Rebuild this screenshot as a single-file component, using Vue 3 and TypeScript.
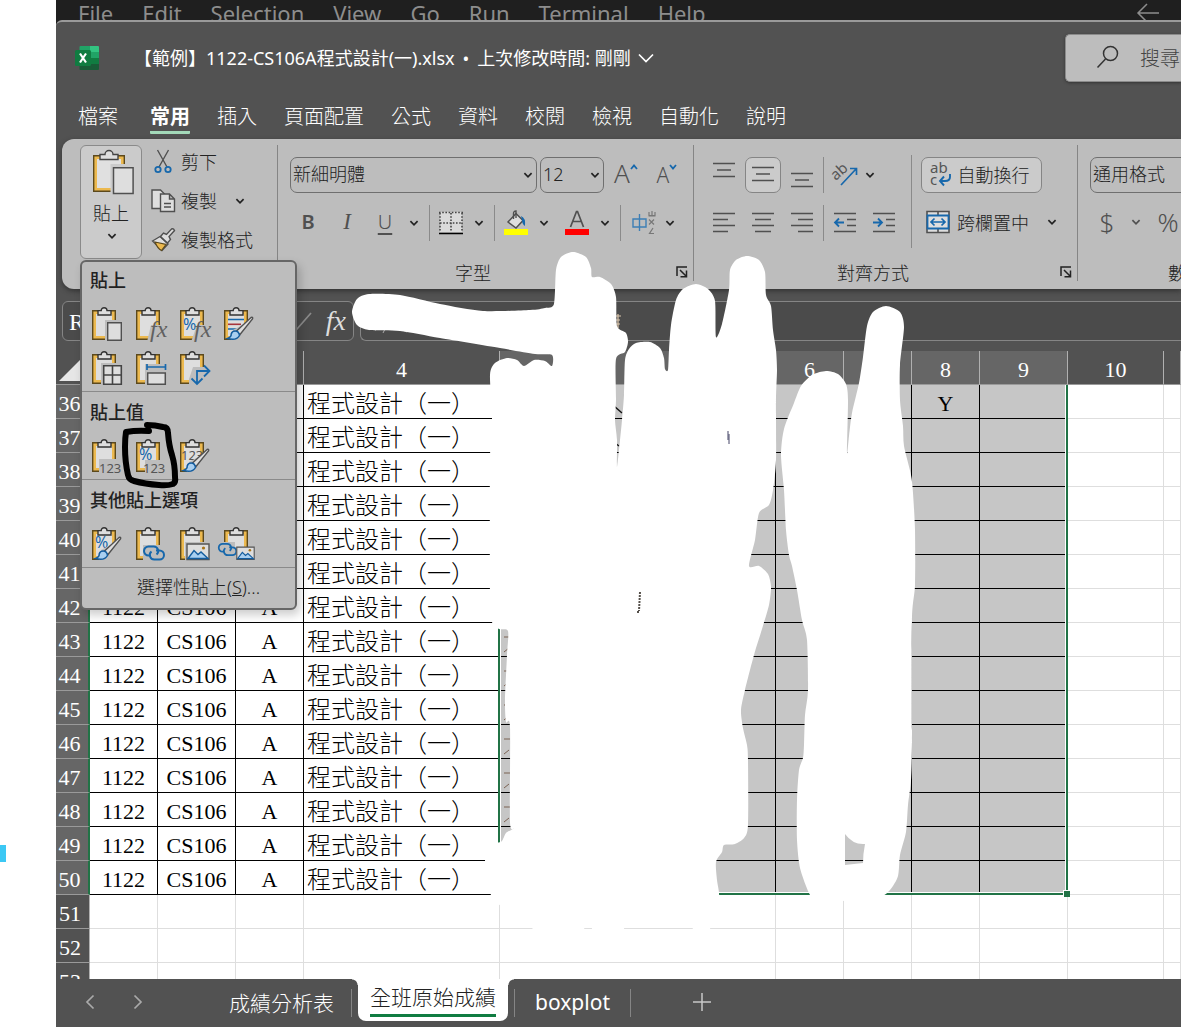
<script setup lang="ts">
type Point = [number, number]

interface Row {
  n: number
  filled: boolean
}

const menus: string[] = ['File', 'Edit', 'Selection', 'View', 'Go', 'Run', 'Terminal', 'Help']
const tabs: string[] = ['檔案', '常用', '插入', '頁面配置', '公式', '資料', '校閱', '檢視', '自動化', '說明']
const rows: Row[] = Array.from({ length: 18 }, (_, i) => ({ n: 36 + i, filled: i < 15 }))
/* Covered headings stay blank. */
const columns: string[] = ['', '', '', '4', '', '6', '', '8', '9', '10', '']

/* The open paste menu covers the first columns down to this row. */
const firstClearRow = 42

/* Turns a list of points into a closed, softly rounded outline. */
function blob(points: Point[]): string {
  const n = points.length
  const k = 8
  let d = `M${points[0][0]} ${points[0][1]}`
  for (let i = 0; i < n; i++) {
    const a = points[(i - 1 + n) % n]
    const b = points[i]
    const c = points[(i + 1) % n]
    const e = points[(i + 2) % n]
    d += `C${b[0] + (c[0] - a[0]) / k} ${b[1] + (c[1] - a[1]) / k} ${c[0] - (e[0] - b[0]) / k} ${c[1] - (e[1] - b[1]) / k} ${c[0]} ${c[1]}`
  }
  return d + 'Z'
}

const nameMask = blob([
  [352, 312], [357, 299], [369, 294], [400, 295], [440, 304], [483, 311], [530, 310], [545, 308], [554, 304],
  [556, 270], [561, 257], [573, 252], [586, 257], [591, 268], [592, 277], [600, 277], [611, 284], [616, 297],
  [617, 326], [626, 333], [628, 342], [625, 352], [616, 359], [616, 400], [615, 420], [617, 440], [617, 467],
  [620, 440], [622, 420], [624, 395], [625, 360], [629, 349], [636, 343], [650, 342], [660, 348], [664, 358],
  [665, 369], [668, 370], [669, 350], [671, 325], [676, 300], [683, 289], [696, 284], [708, 289], [715, 301],
  [716, 337], [722, 324], [729, 290], [730, 270], [736, 260], [747, 256], [759, 260], [765, 272], [766, 295],
  [771, 306], [773, 330], [776, 350], [777, 370], [776, 400], [776, 460], [773, 490], [769, 505], [759, 513],
  [755, 540], [749, 566], [759, 566], [768, 574], [771, 587], [769, 605], [762, 629], [754, 655], [745, 690],
  [741, 710], [743, 728], [747, 745], [748, 760], [748, 825], [744, 838], [735, 844], [724, 845], [722, 852],
  [716, 862], [717, 880], [719, 896], [712, 910], [709, 932], [693, 932], [690, 915], [625, 915], [624, 934],
  [594, 934], [592, 920], [584, 920], [581, 934], [536, 934], [530, 915], [502, 906], [497, 902], [491, 895],
  [487, 880], [485, 860], [486, 848], [497, 843], [502, 841], [506, 833], [514, 828], [510, 822], [510, 727],
  [506, 722], [505, 700], [507, 655], [508, 631], [499, 629], [492, 622], [490, 590], [490, 460], [492, 418],
  [490, 375], [495, 363], [507, 358], [517, 360], [524, 366], [534, 360], [545, 361], [552, 366], [552, 355],
  [535, 354], [500, 348], [440, 338], [400, 331], [369, 330], [357, 325]
])

const scoreMask = blob([
  [826, 371], [812, 375], [801, 386], [794, 403], [784, 429], [781, 455], [784, 490], [786, 530], [789, 555],
  [792, 566], [797, 590], [802, 620], [807, 640], [808, 690], [805, 715], [804, 745], [803, 758], [799, 770],
  [797, 800], [797, 840], [800, 868], [809, 893], [815, 897], [845, 901], [878, 898], [890, 890], [898, 876],
  [900, 855], [906, 832], [908, 805], [911, 780], [912, 740], [912, 620], [915, 585], [915, 530], [913, 493],
  [911, 475], [904, 446], [903, 426], [900, 400], [900, 365], [904, 327], [900, 312], [886, 306], [873, 312],
  [867, 326], [863, 357], [859, 383], [852, 413], [849, 436], [847, 453], [848, 400], [846, 384], [838, 374]
])
const scoreGap = 'M845 834Q853 845 865 844Q863 854 863 863L845 865Z'
</script>

<template>
  <div class="page">
    <svg width="0" height="0" class="sprite" aria-hidden="true">
      <symbol id="chev" viewBox="0 0 10 10"><path d="M1.4 3.2 5 6.8 8.6 3.2" fill="none" stroke="currentColor" stroke-width="1.7" /></symbol>
      <symbol id="clip" viewBox="0 0 44 44">
        <path d="M2.700 7.700h22.600v28.600H2.700z" fill="#ecb94f" stroke="#5c491c" stroke-width="1.400" />
        <path d="M6 11h16v22H6z" fill="#dedede" />
        <path d="M8 12V7.600h3.200a2.900 2.900 0 0 1 5.800 0H21V12z" fill="#dedede" stroke="#333" stroke-width="1.400" />
      </symbol>
      <symbol id="brush" viewBox="0 0 30 30">
        <path d="M8 15 19 9h6v20H5z" fill="#bdbdbd" />
        <path d="M11 16.500 26 2.500q2.400-.8 1.500 1.500L15 19.500z" fill="#dedede" stroke="#505050" stroke-width="1.400" />
        <path d="M10 16q4 0 4.500 4.500-3 5.500-12 3 4-1.500 3.700-4.500.8-3 3.800-3z" fill="#a9cff0" stroke="#135c9e" stroke-width="1.500" />
      </symbol>
      <symbol id="pic" viewBox="0 0 24 18">
        <path d="M1 1h22v15.500H1z" fill="#dedede" stroke="#555" stroke-width="1.400" />
        <path d="m2 15.500 6-8 4 4 3-2.500 7 6.500z" fill="#a9cff0" stroke="#135c9e" stroke-width="1.400" />
        <circle cx="17.500" cy="5" r="1.600" fill="#a8741a" />
      </symbol>
      <symbol id="chain" viewBox="0 0 24 16">
        <path d="M9 10.500H6.500a4.500 4.500 0 1 1 0-9h5a4.500 4.500 0 0 1 3 8M14 5.500h3.500a4.500 4.500 0 1 1 0 9h-5a4.500 4.500 0 0 1-3-8" fill="none" stroke="#1768ac" stroke-width="2" />
      </symbol>
      <symbol id="launch" viewBox="0 0 12 12"><path d="M1 10V1h10M4 4l6 6M10.500 4.500v6.300H4.500" fill="none" stroke="#222" stroke-width="1.500" /></symbol>
    </svg>

    <aside class="gutter"><i class="caret"></i></aside>

    <div class="main">
      <nav class="code-menu">
        <a v-for="m in menus" :key="m" href="#">{{ m }}</a>
        <svg class="back" width="24" height="20" viewBox="0 0 24 20"><path d="M23 10H2m9-9L2 10l9 9" fill="none" stroke="#8d8d8d" stroke-width="1.500" /></svg>
      </nav>

      <div class="excel">
        <header class="title-bar">
          <svg class="logo" width="24" height="24" viewBox="0 0 24 24">
            <path d="M4.500 1q0-1 1-1H15v6H4.500z" fill="#21a366" /><path d="M15 0h8q1 0 1 1v5h-9z" fill="#33c481" />
            <path d="M4.500 6H15v6H4.500z" fill="#107c41" /><path d="M15 6h9v6h-9z" fill="#21a366" />
            <path d="M4.500 12H15v6H4.500z" fill="#185c37" /><path d="M15 12h9v6h-9z" fill="#107c41" />
            <path d="M4.500 18H24v5q0 1-1 1H5.500q-1 0-1-1z" fill="#185c37" />
            <rect x="0" y="4" width="16" height="16" rx="1.500" fill="#107c41" />
            <path d="m5 7.500 6 9M11 7.500l-6 9" stroke="#fff" stroke-width="2.200" />
          </svg>
          <h1><span>【範例】1122-CS106A程式設計(一).xlsx</span><span>•</span><span>上次修改時間: 剛剛</span></h1>
          <svg class="title-chev" width="16" height="10" viewBox="0 0 16 10"><path d="m1 1.500 7 7 7-7" fill="none" stroke="#fff" stroke-width="1.700" /></svg>
          <label class="search">
            <svg width="24" height="24" viewBox="0 0 24 24"><g fill="none" stroke="#333" stroke-width="1.500"><circle cx="14.500" cy="8.500" r="7" /><path d="m9.500 14-8 8.500" /></g></svg>
            <span>搜尋</span>
          </label>
        </header>

        <nav class="tabs">
          <a v-for="t in tabs" :key="t" href="#" :class="{ on: t === '常用' }">{{ t }}</a>
        </nav>

        <section class="ribbon">
          <div class="group clipboard">
            <div class="paste-wrap">
              <button class="paste">
                <svg width="40" height="46" viewBox="2 1 40 46">
                  <path d="M2.700 7.700h30.600v35.600H2.700z" fill="#ecb94f" stroke="#5c491c" stroke-width="1.400" />
                  <path d="M6 11h24v29H6z" fill="#e0e0e0" />
                  <path d="M9 11.500V6.500h5a4 4 0 0 1 8 0h5v5z" fill="#dedede" stroke="#444" stroke-width="1.400" />
                  <path d="M19.500 16H44v31H19.500z" fill="#cbcbcb" />
                  <path d="M22.500 19.800h19.600v25.800H22.500z" fill="#dedede" stroke="#505050" stroke-width="1.500" />
                </svg>
                <span>貼上</span>
                <svg width="10" height="10"><use href="#chev" /></svg>
              </button>

              <div class="menu">
                <section>
                  <h2>貼上</h2>
                  <div class="opts">
                    <button aria-label="貼上"><svg width="44" height="44"><use href="#clip" /><path d="M15 17h19v22H15z" fill="#bdbdbd" /><path d="M17.700 19.700h13.600v17.600H17.700z" fill="#dedede" stroke="#505050" stroke-width="1.400" /></svg></button>
                    <button aria-label="公式"><svg width="44" height="44"><use href="#clip" /><path d="M17 22h12v17H13z" fill="#bdbdbd" /><text x="16" y="34" class="fx">fx</text></svg></button>
                    <button aria-label="公式與數字格式"><svg width="44" height="44"><use href="#clip" /><path d="M19 22h12v17H13z" fill="#bdbdbd" /><text x="5" y="27" class="pct">%</text><text x="16" y="34" class="fx">fx</text></svg></button>
                    <button aria-label="保持來源格式設定"><svg width="44" height="44"><use href="#clip" /><path d="M6 16.500h16M6 26h9" stroke="#1768ac" stroke-width="1.600" /><path d="M6 21.300h13" stroke="#a8343c" stroke-width="1.600" /><use href="#brush" x="3" y="12" width="30" height="30" /></svg></button>
                    <button aria-label="無框線"><svg width="44" height="44"><use href="#clip" /><path d="M11 16h23v22H11z" fill="#bdbdbd" /><path d="M13.700 18.700h17.600v18.600H13.700zM22.500 18.700v18.600M13.700 28h17.600" fill="#dedede" stroke="#444" stroke-width="1.600" /></svg></button>
                    <button aria-label="保持來源欄寬"><svg width="44" height="44"><use href="#clip" /><path d="M11 17h23v22H11z" fill="#bdbdbd" /><path d="M13.700 26h17.600v11.300H13.700z" fill="#dedede" stroke="#505050" stroke-width="1.500" /><path d="M13 17v6M31.500 17v6M13 20h18" stroke="#1768ac" stroke-width="1.700" fill="none" /></svg></button>
                    <button aria-label="轉置"><svg width="44" height="44"><use href="#clip" /><path d="M15 20h11v18H11v-6z" fill="#bdbdbd" /><path d="M19 36V24h12M26 18.500l5.500 5.500-5.500 5.500M13.500 31.500l5.500 5.500 5.500-5.500" stroke="#1768ac" stroke-width="1.800" fill="none" /></svg></button>
                  </div>
                </section>
                <section>
                  <h2>貼上值</h2>
                  <div class="opts">
                    <button aria-label="值"><svg width="44" height="44"><use href="#clip" /><path d="M9 24h22v15H9z" fill="#bdbdbd" /><text x="9" y="38" class="num">123</text></svg></button>
                    <button aria-label="值與數字格式"><svg width="44" height="44"><use href="#clip" /><path d="M11 25h21v14H11z" fill="#bdbdbd" /><text x="5" y="25" class="pct">%</text><text x="9" y="38" class="num">123</text></svg></button>
                    <button aria-label="值與來源格式設定"><svg width="44" height="44"><use href="#clip" /><text x="3" y="25" class="num">123</text><use href="#brush" x="3" y="12" width="30" height="30" /></svg></button>
                  </div>
                </section>
                <section>
                  <h2>其他貼上選項</h2>
                  <div class="opts">
                    <button aria-label="設定格式"><svg width="44" height="44"><use href="#clip" /><text x="5" y="25" class="pct">%</text><use href="#brush" x="3" y="12" width="30" height="30" /></svg></button>
                    <button aria-label="貼上連結"><svg width="44" height="44"><use href="#clip" /><path d="M9 22h19v17H9z" fill="#bdbdbd" /><use href="#chain" x="8" y="22" width="24" height="16" /></svg></button>
                    <button aria-label="圖片"><svg width="44" height="44"><use href="#clip" /><path d="M7 19h25v19H7z" fill="#bdbdbd" /><use href="#pic" x="8" y="20" width="24" height="18" /></svg></button>
                    <button aria-label="連結的圖片"><svg width="44" height="44"><use href="#clip" /><path d="M1 19h12v19H1zM12 24h15v14H12z" fill="#bdbdbd" /><use href="#chain" x="-5" y="19" width="21" height="15" /><use href="#pic" x="14" y="23" width="19" height="15" /></svg></button>
                  </div>
                </section>
                <a class="special" href="#">選擇性貼上(<u>S</u>)...</a>
              </div>
            </div>
            <div class="clip-list">
              <button><svg width="24" height="26" viewBox="0 0 24 26"><g fill="none"><path d="M6.500 1 16 18M17.500 1 8 18" stroke="#505050" stroke-width="1.400" /><g stroke="#1768ac" stroke-width="1.800"><circle cx="7" cy="20.500" r="2.700" /><circle cx="17" cy="20.500" r="2.700" /></g></g></svg>剪下</button>
              <button><svg width="24" height="26" viewBox="0 0 24 26"><g fill="#dedede" stroke="#505050" stroke-width="1.400"><path d="M1 2h8.500l4 4v14.500H1z" /><path d="M9.500 6h9l5 5v12.500h-14zM18.500 6v5h5M13 15.500h7M13 19h7" /></g></svg>複製<svg class="drop" width="10" height="10"><use href="#chev" /></svg></button>
              <button><svg width="24" height="26" viewBox="0 0 24 26"><path d="M1.500 14 9 9.500l8 7.500-6 6.500z" fill="#dedede" stroke="#505050" stroke-width="1.400" /><path d="m4 15 11 2.500-4.500 6q-4-2-6.500-8.500z" fill="#ecb94f" stroke="#5c491c" stroke-width="1.200" /><path d="m9.500 9.500 3-3.500 3 1.500 5-5.500q2-.8 3 1.500l-5.500 6 1.500 3-3 3.500z" fill="#dedede" stroke="#505050" stroke-width="1.400" /></svg>複製格式</button>
            </div>
          </div>

          <div class="group font">
            <div class="line one">
              <span class="combo face"><select aria-label="字型"><option>新細明體</option></select><svg width="10" height="10"><use href="#chev" /></svg></span>
              <span class="combo size"><select aria-label="字型大小"><option>12</option></select><svg width="10" height="10"><use href="#chev" /></svg></span>
              <button class="grow" aria-label="放大字型"><b>A</b><svg width="8" height="6"><path d="m1 5 3-3.500L7 5" fill="none" stroke="#1768ac" stroke-width="1.800" /></svg></button>
              <button class="grow small" aria-label="縮小字型"><b>A</b><svg width="8" height="6"><path d="m1 1 3 3.500L7 1" fill="none" stroke="#1768ac" stroke-width="1.800" /></svg></button>
            </div>
            <div class="line two">
              <button class="bold">B</button>
              <button class="ital">I</button>
              <button class="undl">U</button>
              <button aria-label="底線選項"><svg width="10" height="10"><use href="#chev" /></svg></button>
              <i class="bar"></i>
              <button aria-label="框線"><svg width="24" height="24" viewBox="0 0 24 24"><path d="M1 1h22v20H1z" fill="#dadada" /><path d="M0 1.500h24M1 2v19M23 2v19M12 2v19M1 12h22" fill="none" stroke="#444" stroke-width="1.600" stroke-dasharray="1.600 1.600" /><path d="M0 22.500h24" stroke="#000" stroke-width="1.600" /></svg></button>
              <button aria-label="框線選項"><svg width="10" height="10"><use href="#chev" /></svg></button>
              <i class="bar"></i>
              <button aria-label="填滿色彩"><svg width="24" height="26" viewBox="0 0 24 26"><path d="m4 12 8-8.500 7 7L12 18z" fill="#dedede" stroke="#505050" stroke-width="1.500" /><path d="M9.500 9V3.500q0-2.500 2.500-2.500v7" fill="none" stroke="#505050" stroke-width="1.400" /><path d="M17 6q5 2 4 10-3-2-3-6z" fill="#1768ac" /><path d="M0 19h24v6H0z" fill="#ff0" /></svg></button>
              <button aria-label="填滿選項"><svg width="10" height="10"><use href="#chev" /></svg></button>
              <button aria-label="字型色彩"><svg width="24" height="26" viewBox="0 0 24 26"><path d="m5.500 17 6-15.500h1l6 15.500M8 11.500h8" fill="none" stroke="#505050" stroke-width="1.700" /><path d="M0 19h24v6H0z" fill="#f00" /></svg></button>
              <button aria-label="色彩選項"><svg width="10" height="10"><use href="#chev" /></svg></button>
              <i class="bar"></i>
              <button aria-label="注音"><svg width="24" height="26" viewBox="0 0 24 26"><path d="M1 9h13v8H1zM7.500 4v17" fill="none" stroke="#3d7fb5" stroke-width="1.400" /><path d="M17 2v3.500h6V2M20 1v5M16.500 6h7M17 9.500l5 5M22 9.500l-5 5M21 18l-3.500 5.500H22" fill="none" stroke="#777" stroke-width="1.200" /></svg></button>
              <button aria-label="注音選項"><svg width="10" height="10"><use href="#chev" /></svg></button>
            </div>
            <footer><span>字型</span><button aria-label="字型設定"><svg width="12" height="12"><use href="#launch" /></svg></button></footer>
          </div>

          <div class="group align">
            <div class="cols">
              <div>
                <div class="line top">
                  <button aria-label="靠上對齊"><svg width="22" height="26"><path d="M0 1.500h22M4 8h14M0 14.500h22" class="rule" /></svg></button>
                  <button class="on" aria-label="置中對齊"><svg width="22" height="26"><path d="M0 5.500h22M4 12h14M0 18.500h22" class="rule" /></svg></button>
                  <button aria-label="靠下對齊"><svg width="22" height="26"><path d="M0 11.500h22M4 18h14M0 24.500h22" class="rule" /></svg></button>
                  <i class="bar"></i>
                  <button aria-label="方向"><svg width="26" height="26" viewBox="0 0 26 26"><text x="3" y="17" transform="rotate(-42 6 17)" class="ab">ab</text><path d="M9 23 24 7M18 6.500h6.500V13" fill="none" stroke="#1768ac" stroke-width="1.700" /></svg></button>
                  <button aria-label="方向選項"><svg width="10" height="10"><use href="#chev" /></svg></button>
                </div>
                <div class="line bottom">
                  <button aria-label="靠左對齊"><svg width="22" height="22"><path d="M0 1.500h22M0 7.500h15M0 13.500h22M0 19.500h15" class="rule" /></svg></button>
                  <button aria-label="置中"><svg width="22" height="22"><path d="M0 1.500h22M3 7.500h16M0 13.500h22M3 19.500h16" class="rule" /></svg></button>
                  <button aria-label="靠右對齊"><svg width="22" height="22"><path d="M0 1.500h22M7 7.500h15M0 13.500h22M7 19.500h15" class="rule" /></svg></button>
                  <i class="bar"></i>
                  <button aria-label="減少縮排"><svg width="22" height="22"><path d="M0 1.500h22M13 7.500h9M13 13.500h9M0 19.500h22" class="rule" /><path d="M10 10.500H1.500M5 6.500l-4 4 4 4" fill="none" stroke="#1768ac" stroke-width="1.800" /></svg></button>
                  <button aria-label="增加縮排"><svg width="22" height="22"><path d="M0 1.500h22M13 7.500h9M13 13.500h9M0 19.500h22" class="rule" /><path d="M0 10.500h8.500M5 6.500l4 4-4 4" fill="none" stroke="#1768ac" stroke-width="1.800" /></svg></button>
                </div>
              </div>
              <i class="bar tall"></i>
              <div class="wide">
                <button class="on"><svg width="22" height="26" viewBox="2 0 22 26"><text x="1" y="12" class="ab">ab</text><text x="1" y="24" class="ab">c</text><path d="M21 13v3q0 4-5 4h-5M15 15.500 11 20l4 4.500" fill="none" stroke="#1768ac" stroke-width="1.900" /></svg>自動換行</button>
                <button class="merge"><svg width="24" height="24" viewBox="0 0 24 24"><path d="M1 1.500h22v21H1z" fill="#dedede" stroke="#505050" stroke-width="1.600" /><path d="M12 1v22" stroke="#505050" stroke-width="1.600" /><path d="M1.500 5.500h21v13h-21z" fill="#dedede" stroke="#1768ac" stroke-width="1.800" /><path d="M5 12h14M8.500 8.500 5 12l3.500 3.500M15.500 8.500 19 12l-3.500 3.500" fill="none" stroke="#1768ac" stroke-width="1.700" /></svg>跨欄置中<svg class="drop" width="10" height="10"><use href="#chev" /></svg></button>
              </div>
            </div>
            <footer><span>對齊方式</span><button aria-label="對齊設定"><svg width="12" height="12"><use href="#launch" /></svg></button></footer>
          </div>

          <div class="group number">
            <span class="combo"><select aria-label="數值格式"><option>通用格式</option></select></span>
            <div class="line money">
              <button>$</button>
              <button aria-label="貨幣選項"><svg width="10" height="10"><use href="#chev" /></svg></button>
              <button>%</button>
            </div>
            <footer><span>數值</span></footer>
          </div>
        </section>

        <div class="formula">
          <input class="name" aria-label="名稱方塊" value="R" />
          <div class="fx-box">
            <svg width="28" height="20" viewBox="0 0 28 20"><path d="m6 10 7 8L27 2" fill="none" stroke="#8a8a8a" stroke-width="1.700" /></svg>
            <i>fx</i>
          </div>
          <input class="value" aria-label="資料編輯列" />
        </div>

        <div class="sheet">
          <table>
            <colgroup>
              <col class="w34" /><col class="w68" /><col class="w78" /><col class="w68" /><col class="w196" /><col class="w276" />
              <col class="w68" /><col class="w68" /><col class="w68" /><col class="w88" /><col class="w96" /><col />
            </colgroup>
            <thead>
              <tr>
                <th class="corner"><svg width="22" height="22" viewBox="0 0 22 22"><path d="M22 0v22H0z" fill="#e6e6e6" /></svg></th>
                <th v-for="(c, i) in columns" :key="i" :class="{ picked: i > 3 && i < 9 }">{{ c }}</th>
              </tr>
            </thead>
            <tbody>
              <tr v-for="r in rows" :key="r.n" :class="{ filled: r.filled }">
                <th>{{ r.n }}</th>
                <template v-if="r.filled">
                  <template v-if="r.n >= firstClearRow"><td>1122</td><td>CS106</td><td>A</td></template>
                  <template v-else><td></td><td></td><td></td></template>
                  <td class="course">程式設計（一）</td>
                  <td class="sel"></td><td class="sel"></td><td class="sel"></td>
                  <td class="sel">{{ r.n === 36 ? 'Y' : '' }}</td><td class="sel"></td>
                </template>
                <template v-else><td v-for="k in 9" :key="k"></td></template>
                <td class="plain"></td><td class="plain"></td>
              </tr>
            </tbody>
          </table>
          <div class="range"><i></i></div>
        </div>

        <footer class="sheets">
          <button class="nav" aria-label="上一張"><svg width="10" height="16"><path d="M8.500 1.500 2 8l6.500 6.500" fill="none" stroke="#aaa" stroke-width="1.700" /></svg></button>
          <button class="nav" aria-label="下一張"><svg width="10" height="16"><path d="M1.500 1.500 8 8l-6.500 6.500" fill="none" stroke="#aaa" stroke-width="1.700" /></svg></button>
          <button class="tab first">成績分析表</button>
          <button class="tab active"><span>全班原始成績</span></button>
          <button class="tab last">boxplot</button>
          <button class="add" aria-label="新增工作表"><svg width="18" height="18"><path d="M9 0v18M0 9h18" stroke="#c8c8c8" stroke-width="1.500" /></svg></button>
        </footer>
      </div>
    </div>

    <svg class="ink" aria-hidden="true">
      <path d="m385 329-2 4M400 329l7 3" stroke="#aaa" stroke-width="1" fill="none" />
      <path d="M616 316h5M616 320h4M616 324h4M618 314v14" stroke="#dcc7ad" stroke-width="1.200" fill="none" />
      <path d="m614 406 8 7M615 443l4 3" stroke="#111" stroke-width="1.500" fill="none" />
      <path v-for="k in 6" :key="k" d="M504 0h6M504 15l5-4" :transform="`translate(0 ${603 + k * 34})`" stroke="#7b6252" stroke-width="1" fill="none" />
      <path :d="nameMask" fill="#fff" />
      <path :d="scoreMask + scoreGap" fill="#fff" fill-rule="evenodd" />
      <path d="M728 431v9M729 434v10" stroke="#444466" stroke-width="1" fill="none" />
      <path d="m640 592-1 19M637 612h3" stroke="#55504a" stroke-width="2" stroke-dasharray="2 1" fill="none" />
      <path d="M149 431q-12-1-23 1-1 6-1 15 0 15 3 28 1 5 6 6 11 3 25 4 8 1 14-1 3-2 2-7 0-12-3-22-3-9-4-22 0-6-5-6-8-2-16-2" fill="none" stroke="#000" stroke-width="6" stroke-linecap="round" stroke-linejoin="round" />
    </svg>
  </div>
</template>

<style>
body { margin: 0; background: #fff; }
</style>

<style scoped>
.page, .page * { box-sizing: border-box; }
.page { position: relative; display: flex; height: 100vh; overflow: hidden; font-family: "Noto Sans", "Noto Sans CJK TC", sans-serif; font-size: 18px; font-weight: 300; color: #262626; }
.sprite { position: absolute; }
.page svg { flex: none; display: block; overflow: visible; }
.page button { border: 0; padding: 0; background: none; font: inherit; color: inherit; display: flex; align-items: center; justify-content: center; }
.page a { color: inherit; text-decoration: none; }
.gutter { flex: none; width: 56px; padding-top: 845px; }
.caret { display: block; width: 6px; height: 17px; background: #3cc8f4; }
.main { flex: 1; min-width: 0; display: flex; flex-direction: column; background: #1f1f1f; }

.code-menu { flex: none; height: 20px; display: flex; gap: 29px; padding: 0 22px; overflow: hidden; font-size: 22px; line-height: 26px; font-weight: 400; color: #8d8d8d; }
.code-menu .back { margin: 3px -1px 0 auto; }

.excel { flex: 1; min-height: 0; display: flex; flex-direction: column; background: #525252; border-top: 2px solid #9a9a9a; border-radius: 6px 0 0 0; overflow: hidden; }
.title-bar { flex: none; height: 74px; display: flex; align-items: center; padding: 0 0 2px 19px; color: #fff; }
h1 { display: flex; gap: 8px; margin: 0 0 0 35px; font-size: 18px; line-height: 24px; font-weight: 400; white-space: nowrap; }
.title-chev { margin-left: 7px; }
.search { margin-left: auto; width: 116px; height: 48px; display: flex; align-items: center; gap: 20px; padding: 0 0 2px 30px; background: #bdbdbd; border: 1px solid #8b8b8b; border-right: 0; border-radius: 5px 0 0 5px; box-shadow: 0 1px 3px #333; color: #444; font-size: 20px; white-space: nowrap; overflow: hidden; }
.tabs { flex: none; height: 43px; display: flex; gap: 27px; padding-left: 22px; color: #fff; font-size: 20px; line-height: 42px; }
.tabs a:first-child { margin-right: 5px; }
.tabs .on { height: 38px; font-weight: 700; border-bottom: 3px solid #a3d9b9; border-radius: 1px; }

.ribbon { flex: none; display: flex; height: 150px; margin-left: 6px; background: #bdbdbd; border-radius: 12px 0 0 12px; box-shadow: 0 2px 5px #333; color: #222; position: relative; z-index: 2; }
.group { flex: none; position: relative; border-right: 1px solid transparent; border-image: linear-gradient(transparent 7px, #858585 7px, #858585 141px, transparent 141px) 1; }
.clipboard { width: 216px; display: flex; padding: 6px 0 0 18px; }
.paste-wrap { position: relative; width: 62px; height: 114px; }
.page .paste { width: 62px; height: 114px; flex-direction: column; justify-content: flex-start; padding: 3px 0 0 4px; background: #cbcbcb; border: 1px solid #8a8a8a; border-radius: 6px; }
.paste span { line-height: 26px; margin: 5px 4px 5px 0; }
.paste span + svg { margin-right: 2px; }
.clip-list { padding: 0 0 0 9px; }
.page .clip-list button { height: 39px; gap: 6px; margin-top: -1px; margin-bottom: 1px; white-space: nowrap; line-height: 26px; padding-bottom: 4px; }
.clip-list .drop { margin-left: 12px; }

.menu { position: absolute; z-index: 5; left: 0; top: 115px; width: 217px; background: #bdbdbd; border: 2px solid #666; border-radius: 6px; box-shadow: 3px 5px 10px rgba(0, 0, 0, .2); color: #222; }
.menu section { padding: 2px 0 0 8px; border-bottom: 1px solid #8a8a8a; }
.menu section:first-child { padding-top: 0; }
h2 { margin: 0 0 5px; font-size: 18px; line-height: 36px; font-weight: 500; }
.opts { display: flex; flex-wrap: wrap; }
.opts button { width: 44px; height: 44px; }
.special { display: block; height: 40px; line-height: 38px; padding-left: 55px; font-weight: 300; }
.fx { font: italic 24px "Liberation Serif", serif; fill: #606060; }
.pct { font: 400 16px "Noto Sans", sans-serif; fill: #1768ac; }
.num { font: 400 13px "Noto Sans", sans-serif; fill: #555; }
.ab { font: 400 15px "Noto Sans", sans-serif; fill: #555; }
.rule { fill: none; stroke: #505050; stroke-width: 1.5; }

.font { width: 416px; padding: 18px 0 0 12px; }
.line { display: flex; height: 36px; align-items: center; }
.one { gap: 3px; }
.combo { display: flex; align-items: center; height: 36px; border: 1px solid #6f6f6f; border-radius: 7px; padding-right: 3px; }
.combo select { flex: 1; min-width: 0; height: 34px; appearance: none; border: 0; background: none; padding: 0 0 2px 2px; font: inherit; color: inherit; }
.face { width: 247px; }
.size { width: 64px; }
.page .grow { width: 38px; height: 36px; align-items: flex-start; color: #505050; line-height: 32px; }
.grow b { font-weight: 300; font-size: 26px; }
.grow svg { margin-top: 7px; }
.small b { font-size: 21px; line-height: 36px; }
.two, .top, .bottom { display: grid; justify-items: center; }
.two { margin: 12px 0 0 -1px; grid-template-columns: 38px 40px 36px 22px 9px 33px 24px 7px 36px 20px 46px 10px 21px 25px 28px; }
.bar { width: 1px; height: 36px; background: #8a8a8a; }
.page .line .bold, .page .line .ital, .page .line .undl { color: #505050; line-height: 32px; padding-bottom: 2px; }
.page .line .bold { font-weight: 600; font-size: 20px; }
.page .line .ital { font-family: "Liberation Serif", serif; font-style: italic; font-size: 23px; font-weight: 400; }
.page .line .undl { font-size: 20px; text-decoration: underline; text-underline-offset: 4px; }
.group footer { display: flex; align-items: center; height: 26px; margin-top: 18px; }
.group footer span { flex: 1; text-align: center; }
.font footer { margin-left: -12px; padding-right: 5px; }
.font footer span { padding-right: 8px; }

.align { width: 384px; padding: 18px 0 0 10px; }
.cols { display: flex; }
.top { grid-template-columns: 40px 38px 40px 3px 40px 10px; }
.bottom { margin-top: 12px; grid-template-columns: 40px 38px 40px 3px 40px 38px; }
.top .on { width: 36px; height: 36px; }
.page .align .on { background: #cbcbcb; border: 1px solid #858585; border-radius: 7px; }
.tall { height: 93px; margin: -2px 9px -9px 8px; }
.page .wide button { height: 36px; gap: 7px; padding-bottom: 2px; }
.page .wide .on { width: 121px; gap: 5px; padding-right: 3px; }
.page .wide .merge { margin: 12px 0 0 5px; }
.merge .drop { margin-left: 11px; }
.align footer { margin-left: -10px; padding-right: 5px; }
.align footer span { padding-right: 8px; }

.number { flex: 1; min-width: 0; overflow: hidden; padding: 18px 0 0 12px; border: 0; }
.number .combo { width: 160px; }
.money { margin-top: 12px; font-size: 26px; color: #505050; }
.page .money button { width: 34px; flex: none; line-height: 34px; padding-bottom: 2px; }
.page .money button + button { width: 24px; }
.page .money button + button + button { width: 40px; }
.number footer span { flex: none; padding-left: 78px; white-space: nowrap; }

.formula { flex: none; display: flex; height: 62px; padding: 12px 0 10px 6px; }
.formula > * { height: 40px; background: #4b4b4b; border: 1px solid #858585; border-radius: 6px; }
.formula input { color: #fff; font: 24px "Liberation Serif", serif; padding: 2px 6px 0; }
.name { width: 168px; margin-right: 6px; }
.fx-box { width: 118px; display: flex; align-items: center; justify-content: flex-end; gap: 14px; padding-right: 7px; margin-right: 6px; color: #ddd; }
.fx-box i { font: italic 28px/36px "Liberation Serif", serif; }
.formula .value { flex: 1; min-width: 0; border-right: 0; border-radius: 6px 0 0 6px; }

.sheet { flex: 1; min-height: 0; position: relative; overflow: hidden; background: #fff; }
table { width: 100%; table-layout: fixed; border-collapse: separate; border-spacing: 0; font-family: "Liberation Serif", "Noto Sans CJK TC", serif; font-size: 22px; line-height: 27px; }
.w34 { width: 34px; } .w68 { width: 68px; } .w78 { width: 78px; } .w88 { width: 88px; } .w96 { width: 96px; } .w196 { width: 196px; } .w276 { width: 276px; }
tr { height: 34px; }
th, td { height: 34px; padding: 4px 0 0; text-align: center; font-weight: 400; white-space: nowrap; overflow: hidden; }
th { background: #525252; color: #fff; border-right: 1px solid #b0b0b0; border-bottom: 1px solid #9a9a9a; }
thead .picked { background: #666; }
.corner { padding: 4px 0 0 3px; border-right-color: #525252; }
tbody th { padding-right: 5px; }
.filled th { background: #666; border-right: 2px solid #217346; }
td { color: #000; border-right: 1px solid #dedede; border-bottom: 1px solid #dedede; }
.filled td { border-color: #000; }
.filled .plain { border-color: #dedede; }
.filled .course { font-size: 24px; font-weight: 300; text-align: left; padding: 6px 0 0 3px; }
.filled .sel { background: #c6c6c6; }
.range { position: absolute; left: 442px; top: 31px; width: 570px; height: 513px; border: 2px solid #217346; border-top: 0; box-shadow: inset -1px -1px 0 #fff, inset 1px 0 0 #fff; clip-path: inset(3px -4px -4px 0); }
.range i { position: absolute; right: -4px; bottom: -4px; width: 7px; height: 7px; background: #217346; border: 1px solid #fff; border-right: 0; border-bottom: 0; }

.sheets { flex: none; height: 48px; display: flex; align-items: flex-start; background: #525252; color: #fff; font-size: 21px; }
.page .nav { width: 48px; height: 46px; }
.page .nav:first-child { margin-left: 10px; }
.page .tab { position: relative; height: 46px; white-space: nowrap; }
.page .first { margin-left: 67px; width: 105px; }
.page .active { height: 42px; width: 150px; margin-left: 24px; background: #fff; color: #222; border-radius: 0 0 8px 8px; align-items: flex-start; }
.active span { height: 38px; line-height: 36px; border-bottom: 3px solid #107c41; }
.active::before, .active::after { content: ""; position: absolute; top: 0; width: 6px; height: 6px; }
.active::before { left: -6px; background: radial-gradient(circle at 0 6px, #525252 5px, #fff 6px); }
.active::after { right: -6px; background: radial-gradient(circle at 6px 6px, #525252 5px, #fff 6px); }
.first::after, .last::before, .last::after { content: ""; position: absolute; top: 10px; width: 1px; height: 28px; background: #858585; }
.first::after { right: -18px; }
.last::before { left: -20px; }
.last::after { right: -20px; }
.page .last { margin-left: 26px; width: 77px; font-weight: 400; }
.page .add { margin-left: 82px; height: 46px; }

.ink { position: absolute; z-index: 10; left: 0; top: 0; width: 100%; height: 100%; pointer-events: none; }
</style>
